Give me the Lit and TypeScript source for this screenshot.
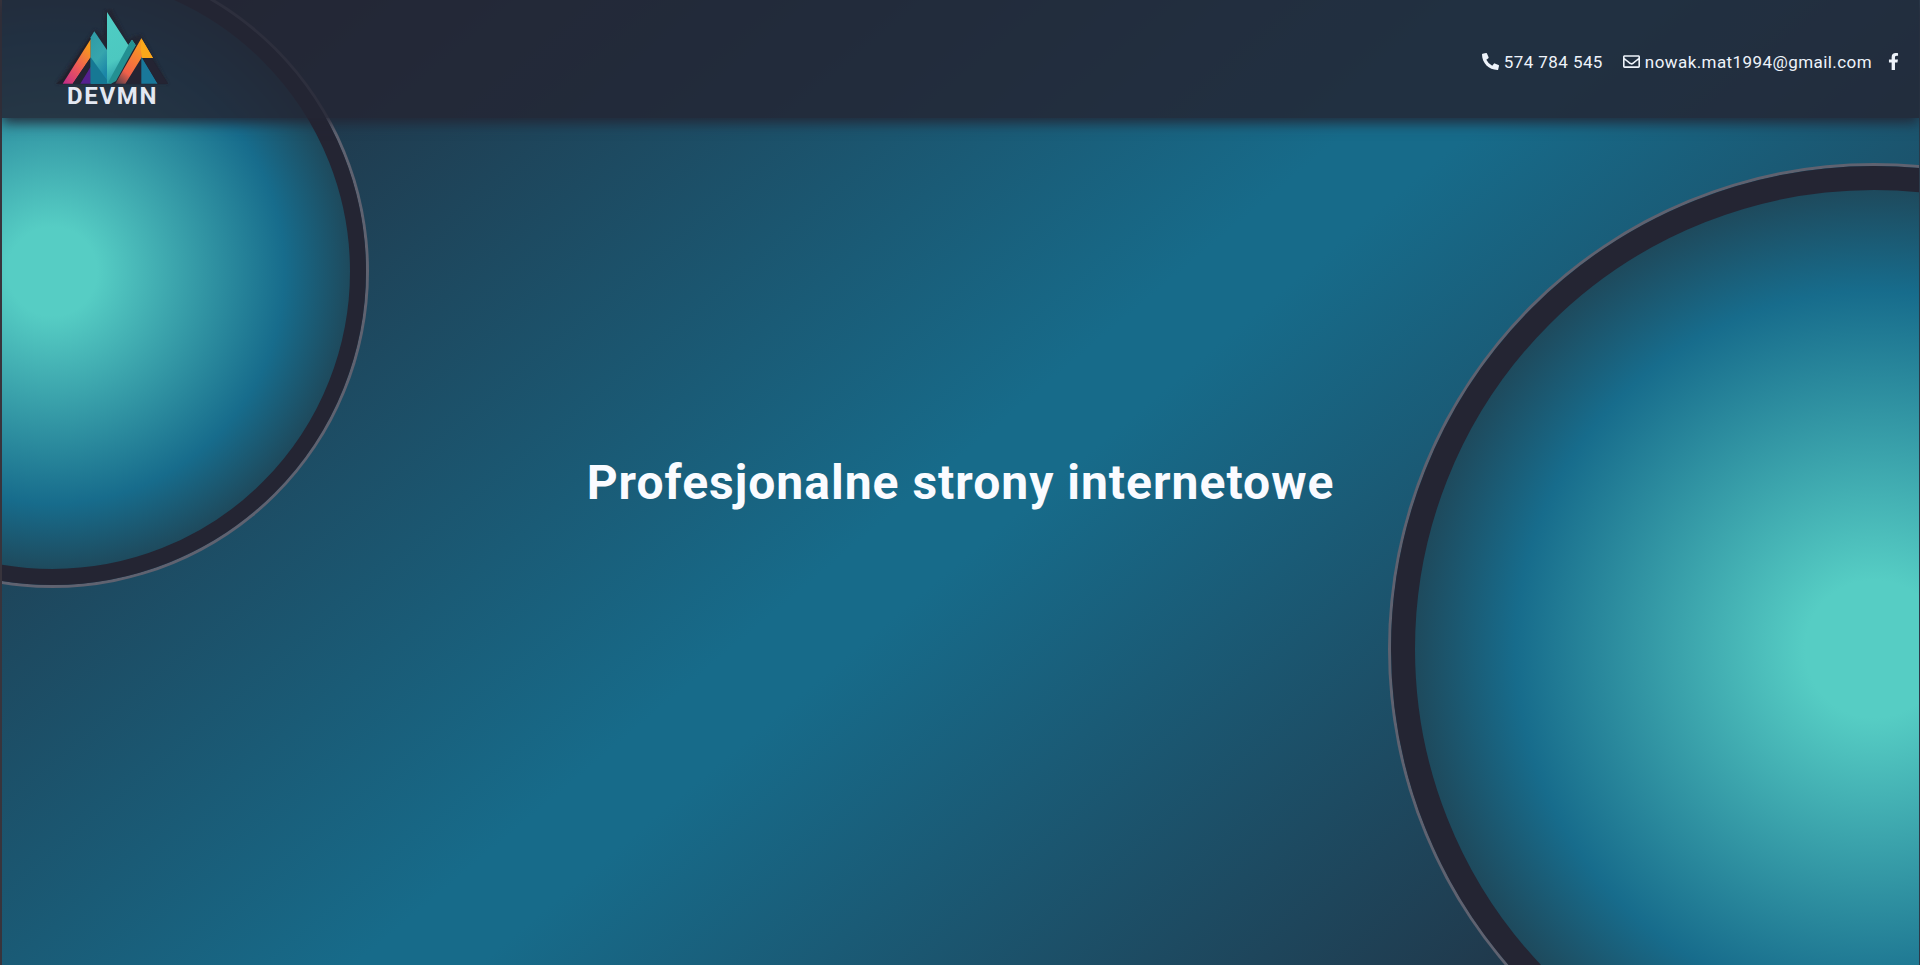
import { LitElement, html, css, svg } from "lit";
import { customElement } from "lit/decorators.js";

const phoneIcon = svg`<path d="M497.39 361.8l-112-48a24 24 0 0 0-28 6.9l-49.6 60.6A370.66 370.66 0 0 1 130.6 204.11l60.6-49.6a23.94 23.94 0 0 0 6.9-28l-48-112A24.16 24.16 0 0 0 122.6.61l-104 24A24 24 0 0 0 0 48c0 256.5 207.9 464 464 464a24 24 0 0 0 23.4-18.6l24-104a24.29 24.29 0 0 0-14.01-27.6z"/>`;
const mailIcon = svg`<path d="M464 64H48C21.49 64 0 85.49 0 112v288c0 26.51 21.49 48 48 48h416c26.51 0 48-21.49 48-48V112c0-26.51-21.49-48-48-48zm0 48v40.805c-22.422 18.259-58.168 46.651-134.587 106.49-16.841 13.247-50.201 45.072-73.413 44.701-23.208.375-56.579-31.459-73.413-44.701C106.18 199.465 70.425 171.067 48 152.805V112h416zM48 400V214.398c22.914 18.251 55.409 43.862 104.938 82.646 21.857 17.205 60.134 55.186 103.062 54.955 42.717.231 80.509-37.199 103.053-54.947 49.528-38.783 82.032-64.401 104.947-82.653V400H48z"/>`;
const facebookIcon = svg`<path d="M279.14 288l14.22-92.66h-88.91v-60.13c0-25.35 12.42-50.06 52.24-50.06h40.42V6.26S260.43 0 225.36 0c-73.22 0-121.08 44.38-121.08 124.72v70.62H22.89V288h81.39v224h100.17V288z"/>`;

@customElement("site-logo")
export class SiteLogo extends LitElement {
  static styles = css`
    :host { display: block; }
    .mark { display: block; width: 120px; height: 102px; }
    .name { font: 700 72px Roboto, sans-serif; letter-spacing: 5px; fill: #e3e8f2; }
  `;

  render() {
    return html`
      <svg class="mark" viewBox="36 24 360 306" role="img" aria-label="DEVMN">
        <defs>
          <linearGradient id="slope" x1="0" y1="1" x2="0.7" y2="0">
            <stop offset="0" stop-color="#c02a8a" />
            <stop offset="0.5" stop-color="#ee5a58" />
            <stop offset="1" stop-color="#f99a1c" />
          </linearGradient>
          <linearGradient id="ridge" x1="0" y1="1" x2="0.7" y2="0">
            <stop offset="0" stop-color="#4a3c4a" />
            <stop offset="0.3" stop-color="#f0604a" />
            <stop offset="1" stop-color="#fba31a" />
          </linearGradient>
          <linearGradient id="sea" x1="0" y1="0" x2="0.4" y2="1">
            <stop offset="0" stop-color="#2f9aa5" />
            <stop offset="0.6" stop-color="#36a5ad" />
            <stop offset="1" stop-color="#1b86a8" />
          </linearGradient>
          <linearGradient id="mint" x1="0" y1="0" x2="0.2" y2="1">
            <stop offset="0" stop-color="#4fcdc4" />
            <stop offset="0.7" stop-color="#4cc8c0" />
            <stop offset="1" stop-color="#2795a6" />
          </linearGradient>
          <filter id="soft" x="-10%" y="-10%" width="120%" height="120%">
            <feGaussianBlur stdDeviation="5" />
          </filter>
        </defs>
        <path d="M48 251L150 108L166 88L188 110L196 30L214 28L262 120L276 110L304 104L384 251Z" fill="#22212e" opacity="0.75" filter="url(#soft)" />
        <path d="M48 251L68 236L152 108V168L98 251ZM334 174L384 251H352L306 168Z" fill="#20202c" />
        <path d="M152 118V172L98 251H68Z" fill="url(#slope)" />
        <path d="M152 172V251H98Z" fill="#242433" />
        <path d="M152 200V251H121Z" fill="#55208f" />
        <path d="M163 94L201 150V251H152V112Z" fill="url(#sea)" />
        <path d="M152 172L201 240V251H152Z" fill="#167894" />
        <path d="M201 36L265 135L276 119L287 136L213 251H201Z" fill="url(#mint)" />
        <path d="M265 136L276 119L287 136L228 243L213 251L205 246Z" fill="#239092" />
        <path d="M304 168V251H256Z" fill="#242433" />
        <path d="M304 115L339 174H304L256 251H226Z" fill="url(#ridge)" />
        <path d="M304 115L339 174H307L302 150Z" fill="#fba81a" />
        <path d="M304 170L353 251H304Z" fill="#19789a" />
        <path d="M322 174H334L384 251H353L310 178Z" fill="#242433" />
        <text class="name" x="81" y="311">DEVMN</text>
      </svg>
    `;
  }
}

@customElement("contact-bar")
export class ContactBar extends LitElement {
  static styles = css`
    :host { display: block; }
    .list { display: flex; align-items: center; gap: 20px; margin: 0; padding: 0; list-style: none; }
    .link { display: flex; align-items: center; gap: 5px; color: #eef3fa; text-decoration: none; line-height: 24px; }
    .icon { display: block; width: 17px; height: 17px; fill: currentColor; }
    .narrow { width: 11px; }
    .social { margin-left: -4px; }
  `;

  render() {
    return html`
      <ul class="list">
        <li>
          <a class="link" href="tel:574784545">
            <svg class="icon" viewBox="0 0 512 512" aria-hidden="true">${phoneIcon}</svg>574 784 545
          </a>
        </li>
        <li>
          <a class="link" href="mailto:nowak.mat1994@gmail.com">
            <svg class="icon" viewBox="0 0 512 512" aria-hidden="true">${mailIcon}</svg>nowak.mat1994@gmail.com
          </a>
        </li>
        <li class="social">
          <a class="link" href="#facebook" aria-label="Facebook">
            <svg class="icon narrow" viewBox="0 0 320 512" aria-hidden="true">${facebookIcon}</svg>
          </a>
        </li>
      </ul>
    `;
  }
}

@customElement("app-root")
export class AppRoot extends LitElement {
  static styles = css`
    :host {
      display: grid;
      box-sizing: border-box;
      min-height: 100vh;
      border-left: 2px solid #38343c;
      border-right: 1px solid #2b3a4a;
      font: 400 17px Roboto, sans-serif;
      letter-spacing: 0.025em;
      color: #fafbff;
    }
    .header {
      grid-area: 1 / 1;
      align-self: start;
      z-index: 1;
      display: flex;
      align-items: center;
      justify-content: space-between;
      padding: 8px 20px 8px 50px;
      background: rgba(36, 37, 51, 0.84);
      box-shadow: 0 5px 12px rgba(36, 37, 51, 0.9);
    }
    .contact { padding-top: 5px; }
    .hero {
      grid-area: 1 / 1;
      position: relative;
      overflow: hidden;
      display: grid;
      place-items: center;
      background: linear-gradient(140deg, #242533, #176b8a 49%, #176b8a 53%, #242533);
    }
    .title { margin: 0; font-size: 48px; line-height: 56px; font-weight: 700; letter-spacing: 1px; text-align: center; z-index: 1; }
    .orb {
      position: absolute;
      box-sizing: content-box;
      aspect-ratio: 1;
      border-radius: 50%;
      border-style: solid;
      border-color: #242533;
      box-shadow: 0 0 0 3px #5f6270;
      background: radial-gradient(closest-side, #56cdc4 15%, #176c8c 78%, #1e4a5d 100%);
    }
    .small { width: 31vw; border-width: 16px; left: -263px; top: -42px; }
    .large { width: 47.8vw; border-width: 24px; right: -438px; top: 166px; }
  `;

  render() {
    return html`
      <header class="header">
        <site-logo></site-logo>
        <contact-bar class="contact"></contact-bar>
      </header>
      <main class="hero">
        <div class="orb small"></div>
        <div class="orb large"></div>
        <h1 class="title">Profesjonalne strony internetowe</h1>
      </main>
    `;
  }
}
